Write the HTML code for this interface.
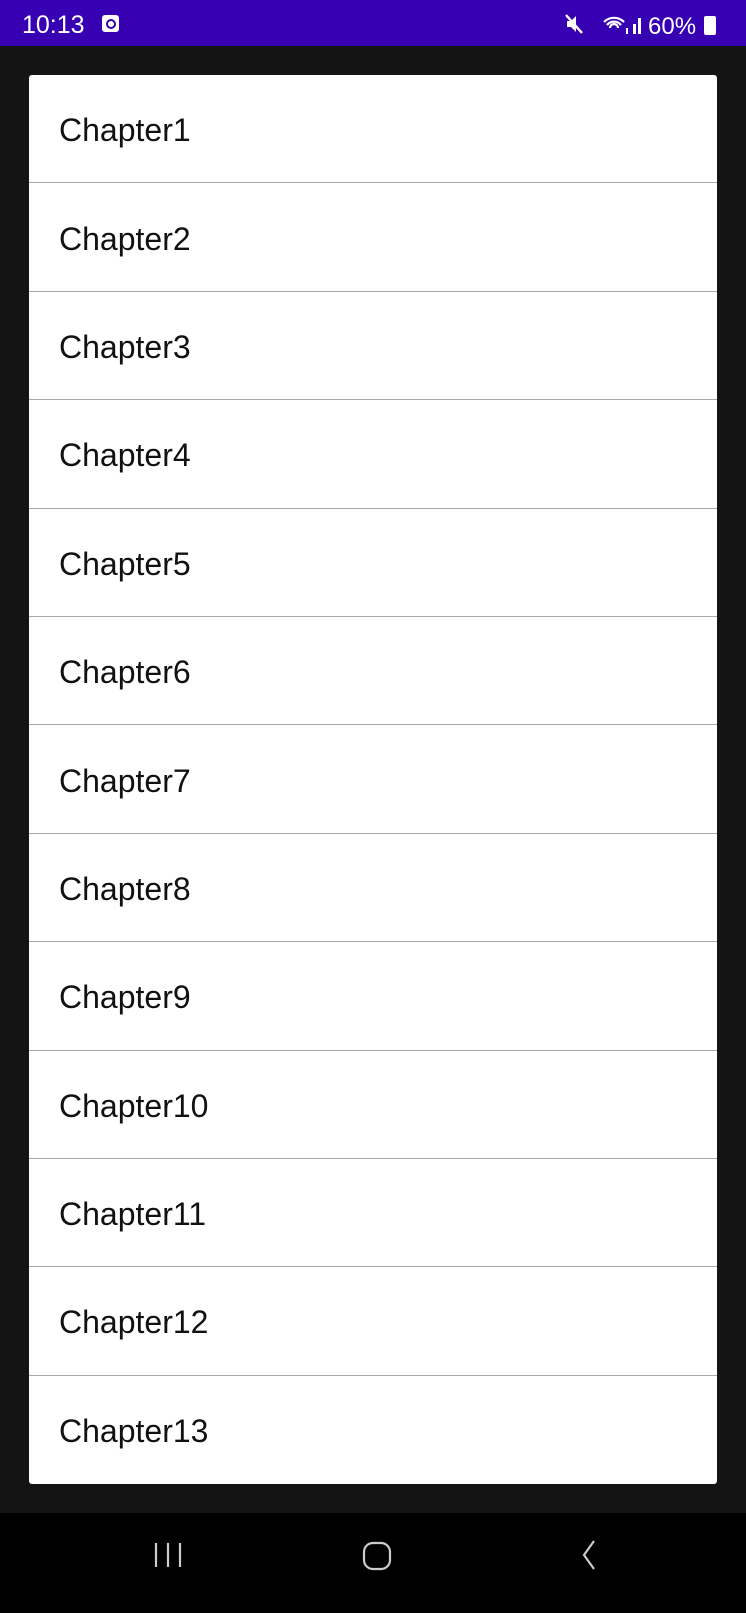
<!DOCTYPE html>
<html><head><meta charset="utf-8"><style>
html,body{margin:0;padding:0;width:746px;height:1600px;background:#141414;overflow:hidden;font-family:"Liberation Sans",sans-serif}
.sb{position:absolute;left:0;top:0;width:746px;height:46px;background:#3700b3;color:#fff}
.card{position:absolute;left:29px;top:75px;width:688px;height:1409px;background:#fff;border-radius:3px;overflow:hidden}
.row{height:107.4px;border-bottom:1.6px solid #a8a8a8;box-sizing:content-box;display:flex;align-items:center;padding-left:30px;font-size:32px;color:#111}
.row span{position:relative;top:2px}
.row:last-child{border-bottom:none}
.nav{position:absolute;left:0;top:1513px;width:746px;height:100px;background:#000}
</style></head><body>
<div class="sb">
<div style="position:absolute;left:22px;top:11px;font-size:25px">10:13</div>
<div style="position:absolute;left:102px;top:15px;width:17px;height:17px;background:#fff;border-radius:3px"><div style="position:absolute;left:4px;top:4px;width:6px;height:6px;border:2px solid #3700b3;border-radius:50%"></div></div>
<svg style="position:absolute;left:564px;top:12px" width="180" height="26" viewBox="0 0 180 26">
<path d="M3 9h4l5-5v16l-5-5H3z" fill="#fff"/><path d="M2 3l16 18" stroke="#fff" stroke-width="2.4"/>
<path d="M40 10a14 14 0 0 1 20 0M43 13a9 9 0 0 1 14 0M46 16a4 4 0 0 1 8 0" stroke="#fff" stroke-width="2.2" fill="none"/>
<rect x="62" y="16" width="2" height="6" fill="#fff"/><rect x="69" y="12" width="3" height="10" fill="#fff"/><rect x="74" y="6" width="3" height="16" fill="#fff"/>
<text x="84" y="22" fill="#fff" font-size="24" font-family="Liberation Sans">60%</text>
<rect x="140" y="4" width="12" height="19" rx="2" fill="#fff"/>
</svg>
</div>
<div class="card">
<div class="row"><span>Chapter1</span></div><div class="row"><span>Chapter2</span></div><div class="row"><span>Chapter3</span></div><div class="row"><span>Chapter4</span></div><div class="row"><span>Chapter5</span></div><div class="row"><span>Chapter6</span></div><div class="row"><span>Chapter7</span></div><div class="row"><span>Chapter8</span></div><div class="row"><span>Chapter9</span></div><div class="row"><span>Chapter10</span></div><div class="row"><span>Chapter11</span></div><div class="row"><span>Chapter12</span></div><div class="row"><span>Chapter13</span></div>
</div>
<div class="nav">
<svg width="746" height="87">
<g stroke="#ccc" stroke-width="2.2" fill="none">
<path d="M156 30v24M168 30v24M180 30v24"/>
<rect x="364" y="30" width="26" height="26" rx="9"/>
<path d="M594 28l-10 14l10 14"/>
</g></svg>
</div>
</body></html>
